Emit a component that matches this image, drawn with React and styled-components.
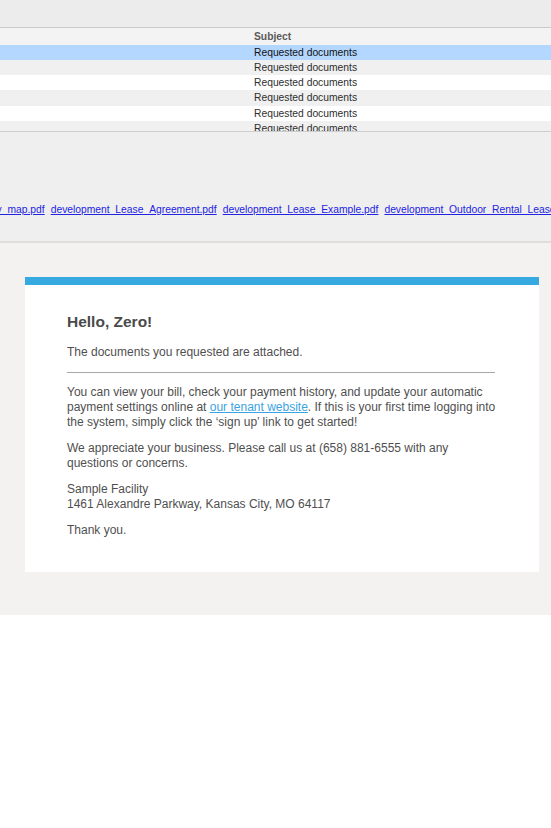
import React, { useLayoutEffect, useRef } from "react";
import styled, { createGlobalStyle } from "styled-components";

const GlobalStyle = createGlobalStyle`
  html, body {
    margin: 0;
    padding: 0;
    background: #ffffff;
    font-family: "Liberation Sans", Arial, sans-serif;
  }
`;

const Page = styled.div`
  width: 551px;
  display: flex;
  flex-direction: column;
`;

const Toolbar = styled.div`
  height: 27px;
  background: #ececec;
  border-bottom: 1px solid #c9c9c9;
`;

const MessageList = styled.div`
  height: 103px;
  overflow: hidden;
  background: #ffffff;
  border-bottom: 1px solid #cdcdcd;
`;

const ListRow = styled.div`
  display: grid;
  grid-template-columns: 254px 1fr;
  height: ${(p) => (p.$header ? "16.5px" : "15.25px")};
  align-items: center;
  font-size: 10.3px;
  white-space: nowrap;
  color: ${(p) => (p.$header ? "#5a5a5a" : p.$selected ? "#111" : "#2e2e2e")};
  font-weight: ${(p) => (p.$header ? 700 : 400)};
  background: ${(p) =>
    p.$header
      ? "#f3f3f3"
      : p.$selected
      ? "#b3d7ff"
      : p.$odd
      ? "#f0f0f0"
      : "#ffffff"};
`;

const AttachmentPane = styled.div`
  height: 111px;
  background: #efefef;
  border-bottom: 2px solid #dedede;
  display: flex;
  align-items: flex-end;
  padding-bottom: 26px;
  box-sizing: border-box;
`;

const AttachmentStrip = styled.div`
  display: flex;
  gap: 6px;
  width: 100%;
  overflow: hidden;
  white-space: nowrap;
`;

const Attachment = styled.a`
  flex: none;
  font-size: 10.3px;
  color: #2323e2;
  text-decoration: underline;
`;

const EmailArea = styled.div`
  background: #f3f2f1;
  padding: 34px 12px 43px 25px;
`;

const Card = styled.div`
  background: #ffffff;
  border-top: 8px solid #35a9e0;
  padding: 27px 40px 34px 42px;
  color: #4f4f4f;
  font-size: 12px;
  line-height: 15px;
`;

const Greeting = styled.h1`
  margin: 0 0 13px;
  font-size: 15.5px;
  line-height: 20px;
  font-weight: 700;
  color: #4a4a4a;
`;

const Para = styled.p`
  margin: 0 0 11px;
  &:last-child {
    margin-bottom: 0;
  }
`;

const Lead = styled(Para)`
  margin-bottom: 0;
`;

const Divider = styled.hr`
  border: 0;
  border-top: 1px solid #a8a8a8;
  margin: 12px 4px 12px 0;
`;

const TenantLink = styled.a`
  color: #3aa3e3;
  text-decoration: underline;
`;

const files = [
  "development_Facility_map.pdf",
  "development_Lease_Agreement.pdf",
  "development_Lease_Example.pdf",
  "development_Outdoor_Rental_Lease.pdf",
];

export default function App() {
  const stripRef = useRef(null);

  // the strip is scrolled sideways; keep the second file at x=51
  useLayoutEffect(() => {
    const strip = stripRef.current;
    if (!strip) return;
    const second = strip.children[1];
    strip.scrollLeft = second.offsetLeft - strip.offsetLeft - 51;
  }, []);

  return (
    <Page>
      <GlobalStyle />
      <Toolbar />
      <MessageList>
        <ListRow $header>
          <span />
          <span>Subject</span>
        </ListRow>
        {[0, 1, 2, 3, 4, 5].map((i) => (
          <ListRow key={i} $selected={i === 0} $odd={i % 2 === 1}>
            <span />
            <span>Requested documents</span>
          </ListRow>
        ))}
      </MessageList>
      <AttachmentPane>
        <AttachmentStrip ref={stripRef}>
          {files.map((f) => (
            <Attachment key={f} href="#">
              {f}
            </Attachment>
          ))}
        </AttachmentStrip>
      </AttachmentPane>
      <EmailArea>
        <Card>
          <Greeting>Hello, Zero!</Greeting>
          <Lead>The documents you requested are attached.</Lead>
          <Divider />
          <Para>
            You can view your bill, check your payment history, and update
            your automatic payment settings online at{" "}
            <TenantLink href="#">our tenant website</TenantLink>. If this is
            your first time logging into the system, simply click the ‘sign
            up’ link to get started!
          </Para>
          <Para>
            We appreciate your business. Please call us at (658) 881-6555
            with any questions or concerns.
          </Para>
          <Para>
            Sample Facility
            <br />
            1461 Alexandre Parkway, Kansas City, MO 64117
          </Para>
          <Para>Thank you.</Para>
        </Card>
      </EmailArea>
    </Page>
  );
}
